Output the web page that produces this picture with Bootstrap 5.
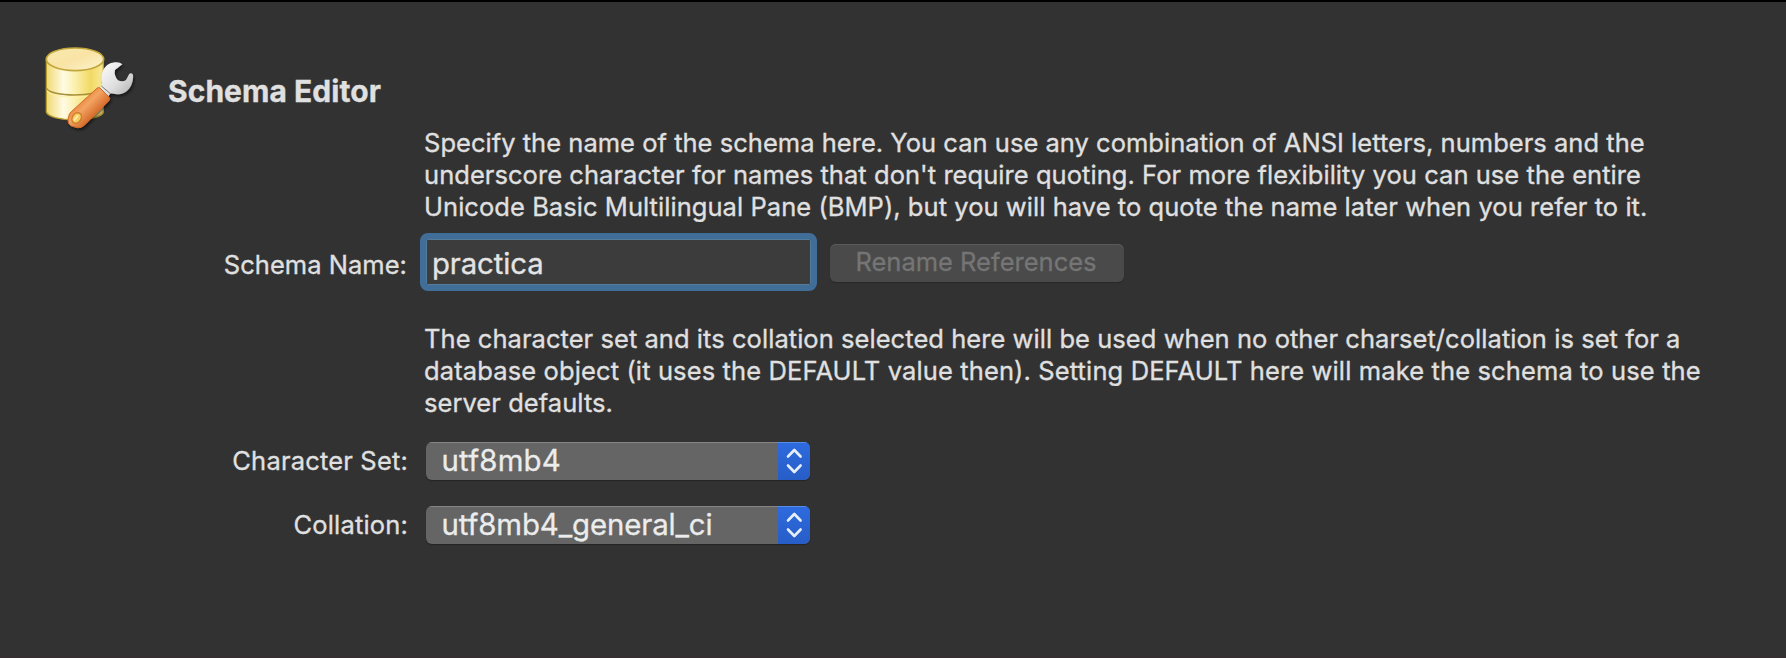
<!DOCTYPE html>
<html lang="en" data-bs-theme="dark">
<head>
<meta charset="utf-8">
<meta name="viewport" content="width=device-width, initial-scale=1">
<title>Schema Editor</title>
<link href="https://cdn.jsdelivr.net/npm/bootstrap@5.3.0/dist/css/bootstrap.min.css" rel="stylesheet">
<style>
  body { background: #323232; color: #e0e0e0; font: 25.5px/32px Inter, "Liberation Sans", sans-serif; letter-spacing: .05px; -webkit-text-stroke: .3px; }
  .editor { border-top: 2px solid #000; border-bottom: 2px solid #362f32; height: 658px; }
  .editor-head { height: 125px; padding: 28px 0 0 30px; }
  .editor-icon { width: 120px; height: 97px; overflow: visible; }
  .editor-title { font-size: 30px; line-height: 36px; font-weight: 700; margin: 43px 0 0 18px; color: #e0e0e0; }
  .form-grid { display: grid; grid-template-columns: 408px 1fr; column-gap: 11.5px; }
  .form-grid .field-label { text-align: right; letter-spacing: .18px; }
  .form-grid .name-label { padding: 5px 1px 0 0; letter-spacing: .03px; }
  .hint { grid-column: 2; padding-left: 4.5px; white-space: nowrap; }
  .hint .tight { letter-spacing: .025px; }
  .hint .wide { letter-spacing: .125px; }
  .charset-hint { margin-top: 22px; }
  .charset-row { padding-top: 23px; }
  .collation-row { padding-top: 26px; }
  .name-row { height: 78px; padding-bottom: 10px; padding-top: 10px; }
  .name-input, .name-input:focus { width: 397.5px; height: 58px; padding: 2px 0 0 6.5px; border: 6px solid #406e98; border-radius: 8px;
    background: #3c3c3c; color: #e4e4e4; font-size: 29.3px; letter-spacing: -.1px; box-shadow: inset 0 0 0 1px #527b9c; }
  .rename-btn { width: 294px; height: 38px; margin: 1px 0 0 13px; padding: 0 2px 1px 0; border: 0; border-radius: 6px;
    font-size: 25.5px; line-height: 32px; letter-spacing: 0; }
  .rename-btn:disabled { background: #4a4a4a; color: #757575; opacity: 1; box-shadow: inset 0 1px #5a5a5a, 0 1px 1px #272727; }
  .popup { width: 384px; height: 38px; margin-left: 6.5px; padding: 0; border: 0; border-radius: 6px; overflow: hidden;
    background: #656565; color: #ececec; font-size: 29.4px; line-height: 38px; box-shadow: 0 1px 1px #242424; letter-spacing: -.12px; }
  .popup .value { flex: 1; padding-left: 15.5px; text-align: left; box-shadow: inset 0 1px #858585; }
  .popup .value.short { letter-spacing: .2px; }
  .popup .arrows { width: 32px; height: 38px; background: linear-gradient(#2e6be0, #275dc6); box-shadow: inset 0 1px #5a8bea; }
</style>
</head>
<body>
<main class="editor">
  <header class="editor-head d-flex align-items-start">
    <svg class="editor-icon" viewBox="0 0 120 97" aria-hidden="true">
      <defs>
        <linearGradient id="side"><stop offset="0" stop-color="#f0d970"/><stop offset=".3" stop-color="#fffbe4"/><stop offset=".5" stop-color="#fbf0ae"/><stop offset=".78" stop-color="#f2d965"/><stop offset="1" stop-color="#f8ea9b"/></linearGradient>
        <linearGradient id="lid" x1="0" y1="0" x2="1" y2="1"><stop offset="0" stop-color="#f8ebb0"/><stop offset=".5" stop-color="#f9e3a5"/><stop offset="1" stop-color="#fcf4cf"/></linearGradient>
        <linearGradient id="steel" x1="0" y1="0" x2="1" y2="1"><stop offset="0" stop-color="#fff"/><stop offset=".55" stop-color="#dedede"/><stop offset="1" stop-color="#a9a9a9"/></linearGradient>
        <linearGradient id="grip" gradientUnits="userSpaceOnUse" x1="145" y1="210" x2="190" y2="255"><stop offset="0" stop-color="#e98236"/><stop offset=".45" stop-color="#f3a463"/><stop offset="1" stop-color="#d87030"/></linearGradient>
        <filter id="drop" x="-20%" y="-20%" width="150%" height="150%"><feDropShadow dx="4" dy="6" stdDeviation="5" flood-color="#000" flood-opacity=".55"/></filter>
      </defs>
      <g transform="scale(.33333)">
        <path d="M49 88V246C58 277 212 277 220 246V88Z" fill="url(#side)" stroke="#b89c30" stroke-width="4"/>
        <path d="M49 174C60 202 207 202 220 174" fill="none" stroke="#a8903a" stroke-width="5"/>
        <path d="M51 182C64 208 205 208 218 182" fill="none" stroke="#fff2a3" stroke-width="3"/>
        <ellipse cx="135" cy="88" rx="86" ry="34" fill="url(#lid)" stroke="#c3a63a" stroke-width="5"/>
        <g filter="url(#drop)">
          <path d="M207 183L217 160C208 122 230 96 260 97Q271 97 277 103L255 120Q251 137 264 151Q278 157 288 150L298 131Q305 127 309 134C312 165 292 194 260 193L242 190L230 205Z" fill="url(#steel)"/>
          <path d="M214 168L240 190M207 177L232 199" stroke="#777" stroke-width="3"/>
          <path d="M201 175Q205 170 210 174L237 201Q242 206 237 212L163 286Q154 295 142 293L124 288Q113 283 114 270L117 256Q118 250 124 245Z" fill="url(#grip)" stroke="#d06a28" stroke-width="3"/>
          <ellipse cx="140" cy="264" rx="13" ry="17" transform="rotate(35 140 264)" fill="#f5cd62" stroke="#cf7d2c" stroke-width="4"/>
          <path d="M134 269L143 258" stroke="#ffeaa0" stroke-width="6" stroke-linecap="round"/>
        </g>
      </g>
    </svg>
    <h1 class="editor-title">Schema Editor</h1>
  </header>

  <form class="form-grid align-items-center">
    <div class="hint"><span class="tight">Specify the name of the schema here. You can use any combination of ANSI letters, numbers and the</span><br>underscore character for names that don't require quoting. For more flexibility you can use the entire<br>Unicode Basic Multilingual Pane (BMP), but you will have to quote the name later when you refer to it.</div>

    <label class="field-label name-label" for="schemaName">Schema Name:</label>
    <div class="name-row d-flex align-items-center">
      <input class="form-control name-input flex-shrink-0" id="schemaName" type="text" value="practica">
      <button class="btn rename-btn" type="button" disabled>Rename References</button>
    </div>

    <div class="hint charset-hint">The character set and its collation selected here will be used when no other charset/collation is set for a<br><span class="wide">database object (it uses the DEFAULT value then). Setting DEFAULT here will make the schema to use the</span><br>server defaults.</div>

    <div class="field-label charset-row">Character Set:</div>
    <div class="charset-row">
      <button class="btn popup d-flex" type="button">
        <span class="value short">utf8mb4</span>
        <span class="arrows"><svg class="d-block" width="32" height="38" fill="none" stroke="#e6eefc" stroke-width="2.6" stroke-linecap="round" stroke-linejoin="round" aria-hidden="true"><path d="M10 14.5L16.3 8L22.6 14.5M10 23.5L16.3 30L22.6 23.5"/></svg></span>
      </button>
    </div>

    <div class="field-label collation-row">Collation:</div>
    <div class="collation-row">
      <button class="btn popup d-flex" type="button">
        <span class="value">utf8mb4_general_ci</span>
        <span class="arrows"><svg class="d-block" width="32" height="38" fill="none" stroke="#e6eefc" stroke-width="2.6" stroke-linecap="round" stroke-linejoin="round" aria-hidden="true"><path d="M10 14.5L16.3 8L22.6 14.5M10 23.5L16.3 30L22.6 23.5"/></svg></span>
      </button>
    </div>
  </form>
</main>
<script src="https://cdn.jsdelivr.net/npm/bootstrap@5.3.0/dist/js/bootstrap.bundle.min.js"></script>
</body>
</html>
